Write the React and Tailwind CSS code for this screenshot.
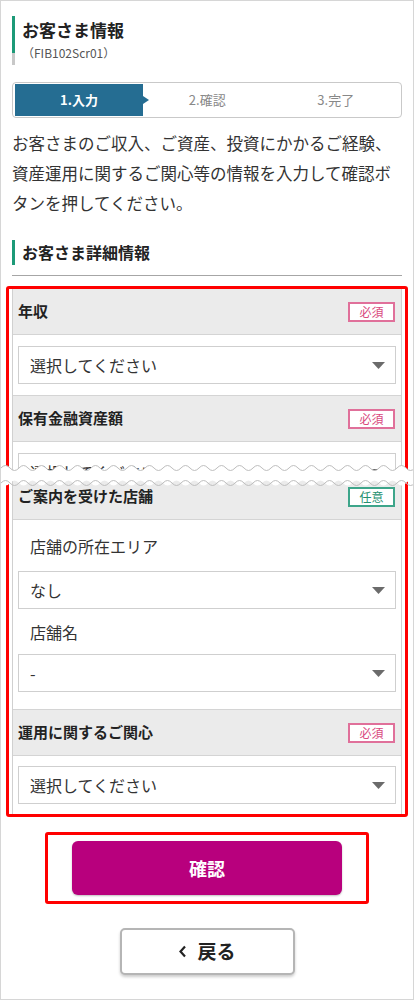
const Badge = ({ type }) =>
  type === "required" ? (
    <span className="flex h-[20px] w-[47px] items-center justify-center border-2 border-[#e0709a] bg-white text-[12px] leading-none text-[#d9487e]">
      必須
    </span>
  ) : (
    <span className="flex h-[20px] w-[47px] items-center justify-center border-2 border-[#3da58a] bg-white text-[12px] leading-none text-[#25906f]">
      任意
    </span>
  );

const RowHeader = ({ label, type }) => (
  <div className="flex h-[46px] items-center justify-between border-b border-[#d4d4d4] bg-[#ebebeb] pl-[5px] pr-[6px]">
    <span className="text-[15px] font-bold text-[#222]">{label}</span>
    <Badge type={type} />
  </div>
);

const Select = ({ value }) => (
  <div className="flex h-[38px] items-center justify-between border border-[#cfcfcf] bg-white pl-[11px] pr-[10px]">
    <span className="text-[16px] text-[#333]">{value}</span>
    <svg width="13" height="7" viewBox="0 0 13 7">
      <path d="M0 0 H13 L6.5 7 Z" fill="#6b6b6b" />
    </svg>
  </div>
);

// wavy "cut" band drawn over the skipped part of the form
const wave = (y, from, to, step) => {
  let d = `Q${from + step / 2} ${y - 5} ${from + step} ${y}`;
  for (let x = from + 2 * step; step > 0 ? x <= to : x >= to; x += step) d += ` T${x} ${y}`;
  return d;
};
const top = "M0 5 " + wave(5, 0, 414, 9);
const bottom = "M0 20 " + wave(20, 0, 414, 9);
const band = "M0 5 " + wave(5, 0, 414, 9) + " V20 " + wave(20, 414, 0, -9) + " Z";

const Wave = () => (
  <svg className="absolute left-0 top-[462px]" width="414" height="24" viewBox="0 0 414 24">
    <path d={band} fill="#fff" />
    <path d={top} fill="none" stroke="#bdbdbd" strokeWidth="1" />
    <path d={bottom} fill="none" stroke="#bdbdbd" strokeWidth="1" />
  </svg>
);

export default function App() {
  return (
    <div
      className="relative h-[1000px] w-[414px] overflow-hidden border border-[#d6d6d6] bg-white px-[11px] text-[#222]"
      style={{ fontFamily: '"Noto Sans CJK JP", "Noto Sans", sans-serif' }}
    >
      {/* Page title */}
      <div className="mt-[15px] flex">
        <div className="flex w-[3px] flex-col">
          <div className="h-[37px] bg-[#1d9a78]" />
          <div className="h-[12px] bg-[#c8c8c8]" />
        </div>
        <div className="pl-[7px]">
          <h1 className="text-[17px] font-bold leading-[28px]">お客さま情報</h1>
          <p className="text-[12px] leading-[18px] text-[#555]">（FIB102Scr01）</p>
        </div>
      </div>

      {/* Stepper */}
      <div className="mt-[17px] flex h-[36px] rounded-[4px] border border-[#c9c9c9] py-[1px] pl-[2px] pr-[1px]">
        <div className="relative flex w-[128px] items-center justify-center bg-[#256d92] text-[13px] font-bold text-white">
          1.入力
          <span className="absolute right-[-6px] top-1/2 h-0 w-0 -translate-y-1/2 border-y-[4px] border-l-[6px] border-y-transparent border-l-[#256d92]" />
        </div>
        <div className="flex flex-1 items-center justify-center text-[13px] text-[#888]">2.確認</div>
        <div className="flex flex-1 items-center justify-center text-[13px] text-[#888]">3.完了</div>
      </div>

      <p className="mt-[10px] text-[16.5px] leading-[30px] text-[#333]">
        お客さまのご収入、ご資産、投資にかかるご経験、資産運用に関するご関心等の情報を入力して確認ボタンを押してください。
      </p>

      {/* Section heading */}
      <div className="mt-[22px] flex items-center border-b border-[#a6a6a6] pb-[10px]">
        <div className="h-[25px] w-[3px] bg-[#1d9a78]" />
        <h2 className="pl-[7px] text-[16px] font-bold leading-[25px]">お客さま詳細情報</h2>
      </div>

      {/* Form */}
      <div className="mx-[-6px] mt-[10px] rounded-[3px] border-[3px] border-[#ff0000] px-[3px]">
        <div className="border-x border-[#d0d0d0]">
          <RowHeader label="年収" type="required" />
          <div className="border-b border-[#d4d4d4] bg-white px-[5px] py-[11px]">
            <Select value="選択してください" />
          </div>

          <RowHeader label="保有金融資産額" type="required" />
          <div className="h-[32px] overflow-hidden border-b border-[#d4d4d4] bg-white px-[5px] pt-[11px]">
            <Select value="選択してください" />
          </div>

          <RowHeader label="ご案内を受けた店舗" type="optional" />
          <div className="border-b border-[#d4d4d4] bg-white px-[5px] pb-[17px] pt-[14px]">
            <p className="pl-[12px] text-[16px] leading-[24px] text-[#333]">店舗の所在エリア</p>
            <div className="mt-[13px]">
              <Select value="なし" />
            </div>
            <p className="mt-[11px] pl-[12px] text-[16px] leading-[24px] text-[#333]">店舗名</p>
            <div className="mt-[10px]">
              <Select value="-" />
            </div>
          </div>

          <RowHeader label="運用に関するご関心" type="required" />
          <div className="bg-white px-[5px] pb-[10px] pt-[10px]">
            <Select value="選択してください" />
          </div>
        </div>
      </div>

      <Wave />

      {/* Buttons */}
      <div className="mt-[15px] flex justify-center">
        <div className="rounded-[3px] border-[3px] border-[#ff0000] px-[24px] py-[6px]">
          <button className="flex h-[54px] w-[270px] items-center justify-center rounded-[6px] bg-[#b8007d] text-[18px] font-bold text-white shadow-[0_1px_2px_rgba(0,0,0,0.25)]">
            確認
          </button>
        </div>
      </div>

      <div className="mt-[24px] flex justify-center">
        <button className="flex h-[47px] w-[175px] items-center justify-center gap-[10px] rounded-[5px] border-2 border-[#b5b5b5] bg-white text-[19px] font-bold text-[#222] shadow-[0_2px_3px_rgba(0,0,0,0.2)]">
          <svg width="9" height="13" viewBox="0 0 9 13">
            <path d="M7 1.5 L2.5 6.5 L7 11.5" fill="none" stroke="#222" strokeWidth="2.2" />
          </svg>
          戻る
        </button>
      </div>
    </div>
  );
}
